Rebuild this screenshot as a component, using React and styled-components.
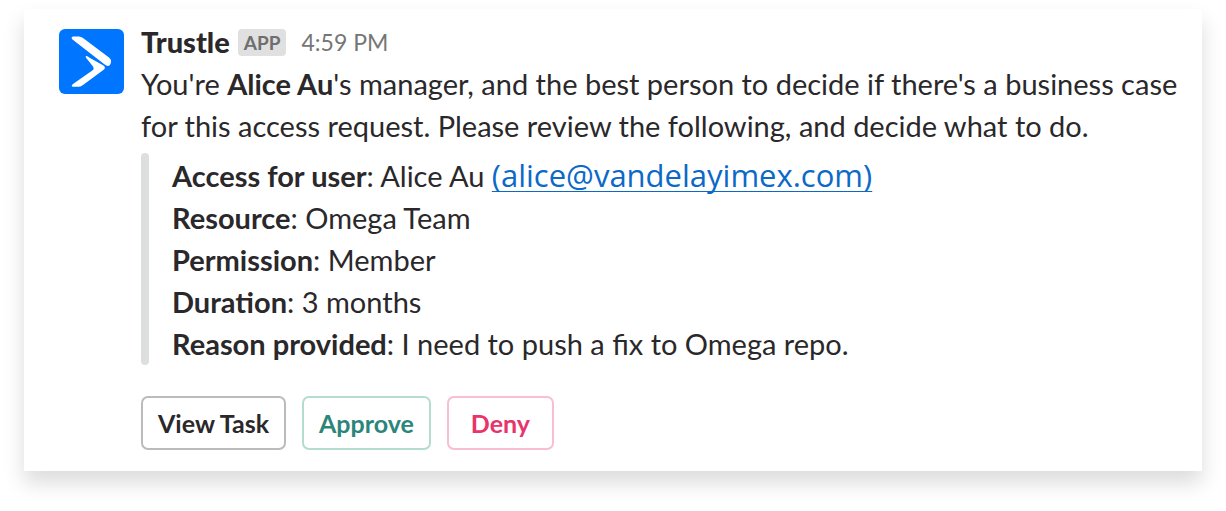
import React from "react";
import styled, { createGlobalStyle } from "styled-components";

const Global = createGlobalStyle`
  * { box-sizing: border-box; }
  body { margin: 0; background: #fff; color: #2a282a; font-family: Lato, sans-serif; }
`;
const Page = styled.main`
  padding: 9px 24px 40px;
`;
const Card = styled.article`
  display: flex;
  gap: 17px;
  padding: 12px 20px 21px 35px;
  background: #fff;
  box-shadow: 0 12px 20px rgba(0, 0, 0, 0.14);
`;
const Logo = styled.svg`
  flex: none;
  width: 65px;
  height: 65px;
  margin-top: 8px;
`;
const Body = styled.div`
  flex: 1;
  min-width: 0;
`;
const Header = styled.header`
  display: flex;
  align-items: center;
  gap: 8px;
  height: 42px;
`;
const Sender = styled.h1`
  margin: 0;
  font-size: 29px;
  line-height: 42px;
  font-weight: 900;
`;
const Badge = styled.span`
  padding: 0 6px;
  border-radius: 4px;
  background: #e0e0e0;
  color: #6f6e6f;
  font-size: 19px;
  line-height: 27px;
  font-weight: 700;
`;
const Time = styled.time`
  margin-left: 7px;
  color: #767576;
  font-size: 23px;
  line-height: 42px;
`;
const Message = styled.p`
  margin: 0;
  font-size: 29px;
  line-height: 42px;
`;
const Details = styled.ul`
  position: relative;
  margin: 6px 0 0;
  padding: 2px 0 0 31px;
  list-style: none;
  font-size: 29px;
  line-height: 42px;

  &::before {
    content: "";
    position: absolute;
    inset: 0 auto 0 0;
    width: 8px;
    border-radius: 4px;
    background: #dddfde;
  }
`;
const Email = styled.a`
  color: #0b69c7;
  font-family: "Open Sans", sans-serif;
  font-size: 31px;
  line-height: 1;
  text-decoration-thickness: 1px;
  text-underline-offset: 4px;
  text-decoration-skip-ink: none;
`;
const Actions = styled.div`
  display: flex;
  gap: 16px;
  margin-top: 31px;
`;
const Button = styled.button`
  min-width: 107px;
  height: 54px;
  padding: 0 15px;
  border: 2px solid ${(p) => p.$border};
  border-radius: 7px;
  background: #fff;
  color: ${(p) => p.$color};
  font: 700 25px Lato, sans-serif;
`;

const details = [
  ["Resource", "Omega Team"],
  ["Permission", "Member"],
  ["Duration", "3 months"],
  ["Reason provided", "I need to push a fix to Omega repo."],
];

export default function App() {
  return (
    <Page>
      <Global />
      <Card>
        <Logo viewBox="0 0 65 65" aria-hidden="true">
          <rect width="65" height="65" rx="6" fill="#0075ff" />
          <path
            d="M14 7.500 H20 Q22 7.500 24 9 L50 28.500 Q52.500 30.500 52 33 Q51.500 37 48.500 37 Q47 36.500 45 35 L13.500 10.500 Q11.500 8 14 7.500 Z"
            fill="#fff"
          />
          <path
            d="M27 27 Q28 26.500 31 29 L44.500 36.500 Q47 38.500 45 40.500 L24 56 Q22 57.800 20 57.800 H14 Q11.500 57.500 14 55 L34 41 Q35.500 39.500 34 37.500 L28 30 Q26 27.500 27 27 Z"
            fill="#fff"
          />
        </Logo>
        <Body>
          <Header>
            <Sender>Trustle</Sender>
            <Badge>APP</Badge>
            <Time>4:59 PM</Time>
          </Header>
          <Message>
            You're <b>Alice Au</b>'s manager, and the best person to decide if there's a business case for this access request. Please review the following, and decide what to do.
          </Message>
          <Details>
            <li>
              <b>Access for user</b>: Alice Au <Email href="mailto:alice@vandelayimex.com">(alice@vandelayimex.com)</Email>
            </li>
            {details.map(([label, value]) => (
              <li key={label}><b>{label}</b>: {value}</li>
            ))}
          </Details>
          <Actions>
            <Button type="button" $border="#bbb" $color="#2a282a">View Task</Button>
            <Button type="button" $border="#b4dccf" $color="#2b857a">Approve</Button>
            <Button type="button" $border="#f9bed0" $color="#e8336b">Deny</Button>
          </Actions>
        </Body>
      </Card>
    </Page>
  );
}
